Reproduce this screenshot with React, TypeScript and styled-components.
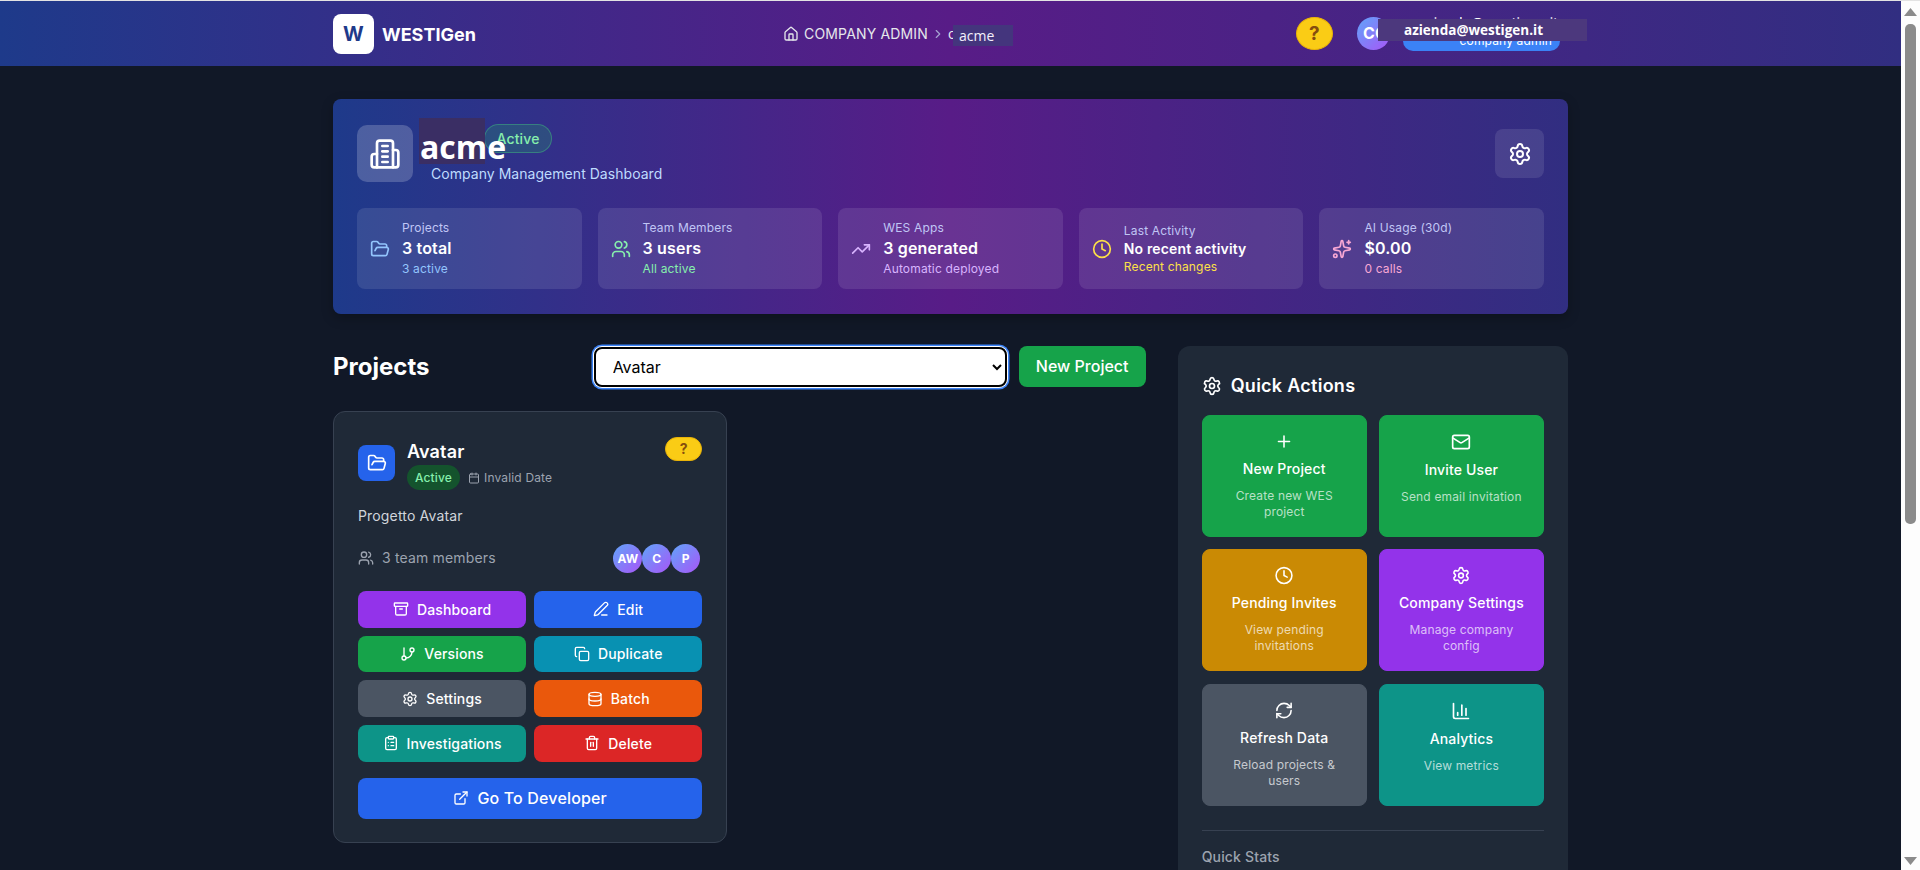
import React from "react";
import styled, { createGlobalStyle } from "styled-components";
import {
  Archive, Calendar, ChartColumn, ChevronRight, ClipboardList, Clock, Copy, Database,
  ExternalLink, FolderOpen, GitBranch, House, Mail, PenLine, Plus, RefreshCw, Settings, Sparkles, Trash2,
  TrendingUp, Users,
} from "lucide-react";

const GlobalStyle = createGlobalStyle`
  html, body { margin: 0; padding: 0; height: 100%; overflow: hidden; }
  body { background: #111827; font-family: Inter, "Liberation Sans", sans-serif; color: #fff; letter-spacing: 0.01em; }
  * { box-sizing: border-box; }
`;

const Frame = styled.div`
  display: flex;
  width: 1920px;
  height: 870px;
  overflow: hidden;
  border-top: 1px solid #e3e3e3;
`;

const Page = styled.div`
  flex: 1;
  min-width: 0;
  background: #111827;
`;

const Track = styled.div`
  position: relative;
  width: 19px;
  background: #fdfdfd;
  display: flex;
  flex-direction: column;
  align-items: center;
`;

const ArrowUp = styled.svg`
  width: 13px;
  height: 8px;
  margin-top: 7px;
  fill: #8b8b8b;
`;

const ArrowDown = styled(ArrowUp)`
  margin-top: auto;
  margin-bottom: 5px;
`;

const Thumb = styled.div`
  width: 11px;
  height: 500px;
  margin-top: 8px;
  border-radius: 5px;
  background: #8b8b8b;
`;

const Bar = styled.header`
  height: 65px;
  background: linear-gradient(to right, #1e3a8a, #581c87, #312e81);
`;

const Inner = styled.div`
  width: 1235px;
  margin: 0 auto 0 333px;
`;

const BarInner = styled(Inner)`
  height: 100%;
  display: flex;
  align-items: center;
`;

const Brand = styled.div`
  display: flex;
  align-items: center;
  gap: 8px;
  width: 450px;
  margin-top: 1px;
`;

const LogoBox = styled.div`
  width: 41px;
  height: 40px;
  border-radius: 8px;
  background: #fff;
  color: #1e3a8a;
  font-size: 20px;
  font-weight: 700;
  display: flex;
  align-items: center;
  justify-content: center;
`;

const BrandName = styled.span`
  font-size: 18px;
  font-weight: 700;
  letter-spacing: 0;
`;

const Crumbs = styled.nav`
  display: flex;
  align-items: center;
  font-size: 14px;
  color: #e5e7eb;
`;

const CrumbLabel = styled.span`
  margin-left: 5px;
`;

const CrumbSep = styled.span`
  display: flex;
  margin: 0 1px 0 3px;
  color: #a5a3d0;
`;

const CrumbCut = styled.span`
  width: 5px;
  overflow: hidden;
  margin-left: 2px;
`;

const CrumbMask = styled.span`
  width: 60px;
  height: 21px;
  padding-left: 6px;
  margin-top: 4px;
  background: #44357d;
  color: #f3f0fb;
  font-family: "Open Sans", sans-serif;
  font-size: 14px;
  line-height: 21px;
  letter-spacing: 0;
`;

const BarRight = styled.div`
  margin-left: auto;
  display: flex;
  align-items: center;
  position: relative;
  height: 100%;
`;

const HelpButton = styled.div`
  width: 37px;
  height: 33px;
  border-radius: 50%;
  background: #facc15;
  border: 1px solid #eab308;
  color: #854d0e;
  font-weight: 700;
  font-size: 19px;
  display: flex;
  align-items: center;
  justify-content: center;
`;

const UserAvatar = styled.div`
  width: 33px;
  height: 33px;
  margin-left: 24px;
  padding-left: 6px;
  border-radius: 50%;
  background: linear-gradient(135deg, #60a5fa, #a855f7);
  font-size: 16px;
  font-weight: 700;
  line-height: 33px;
  overflow: hidden;
`;

const UserBlock = styled.div`
  width: 157px;
  margin-left: 13px;
  margin-right: 8px;
  display: flex;
  flex-direction: column;
  align-items: flex-end;
`;

const UserEmail = styled.div`
  font-size: 14px;
  line-height: 17px;
  padding-right: 2px;
  margin-top: -2px;
`;

const RolePill = styled.div`
  width: 100%;
  height: 20px;
  border-radius: 10px;
  background: #3b82f6;
  font-size: 12px;
  line-height: 20px;
  text-align: right;
  padding-right: 8px;
`;

const EmailMask = styled.div`
  position: absolute;
  left: 82px;
  top: 18px;
  width: 209px;
  height: 22px;
  background: #4c387d;
  font-family: "Open Sans", sans-serif;
  font-size: 13.5px;
  font-weight: 700;
  line-height: 22px;
  letter-spacing: 0;
  padding-left: 26px;
`;

const Hero = styled.section`
  margin-top: 33px;
  height: 215px;
  padding: 24px;
  border-radius: 8px;
  background: linear-gradient(to right, #1e3a8a, #581c87, #312e81);
  box-shadow: 0 4px 12px rgba(0, 0, 0, 0.25);
`;

const HeroTop = styled.div`
  display: flex;
  align-items: center;
  justify-content: space-between;
  height: 61px;
`;

const HeroLeft = styled.div`
  display: flex;
  align-items: center;
  gap: 16px;
  height: 100%;
`;

const HeroIcon = styled.div`
  width: 56px;
  height: 57px;
  border-radius: 10px;
  background: rgba(255, 255, 255, 0.2);
  display: flex;
  align-items: center;
  justify-content: center;
`;

const BuildingSvg = styled.svg`
  width: 32px;
  height: 32px;
  fill: none;
  stroke: #fff;
  stroke-width: 2;
  stroke-linecap: round;
  stroke-linejoin: round;
`;

const HeroText = styled.div`
  align-self: flex-start;
  margin-top: -5px;
`;

const TitleRow = styled.div`
  display: flex;
  align-items: flex-start;
  margin-left: -10px;
`;

const NameMask = styled.div`
  position: relative;
  z-index: 1;
  width: 66px;
  height: 46px;
  background: #3a2e64;
  padding-left: 1px;
  font-family: "Open Sans", sans-serif;
  font-size: 32px;
  font-weight: 700;
  line-height: 57px;
  letter-spacing: 0;
  white-space: nowrap;
`;

const HeroBadge = styled.span`
  width: 68px;
  height: 29px;
  margin: 6px 0 0 -1px;
  border: 1px solid rgba(74, 222, 128, 0.35);
  border-radius: 15px;
  background: rgba(34, 197, 94, 0.2);
  color: #86efac;
  font-size: 14px;
  font-weight: 500;
  line-height: 27px;
  text-align: center;
`;

const HeroSub = styled.div`
  margin-top: -2px;
  margin-left: 2px;
  color: #bfdbfe;
  font-size: 14px;
  line-height: 24px;
  letter-spacing: 0.003em;
`;

const GearButton = styled.div`
  width: 49px;
  height: 49px;
  border-radius: 8px;
  background: rgba(255, 255, 255, 0.1);
  display: flex;
  align-items: center;
  justify-content: center;
`;

const StatGrid = styled.div`
  display: grid;
  grid-template-columns: repeat(5, 1fr);
  gap: 16px;
  margin-top: 24px;
`;

const StatCard = styled.div`
  height: 81px;
  padding: 0 12px 0 13px;
  border-radius: 8px;
  background: rgba(255, 255, 255, 0.1);
  display: flex;
  align-items: center;
  gap: 12px;
`;

const StatLabel = styled.div`
  color: #c0c6f5;
  font-size: 12px;
  line-height: 16px;
`;

const StatValue = styled.div<{ $small?: boolean }>`
  font-size: ${(p) => (p.$small ? "14px" : "16px")};
  line-height: ${(p) => (p.$small ? "20px" : "24px")};
  margin-bottom: ${(p) => (p.$small ? "0" : "1px")};
  font-weight: 600;
`;

const StatNote = styled.div<{ $color: string }>`
  color: ${(p) => p.$color};
  font-size: 12px;
  line-height: 16px;
`;

const Columns = styled.div`
  display: grid;
  grid-template-columns: 812.67px 390.33px;
  gap: 32px;
  margin-top: 32px;
`;

const ProjectsHead = styled.div`
  display: flex;
  align-items: center;
  justify-content: space-between;
  height: 41px;
  margin-bottom: 24px;
`;

const ProjectsTitle = styled.h2`
  margin: 0;
  font-size: 24px;
  font-weight: 700;
  letter-spacing: 0;
`;

const HeadTools = styled.div`
  display: flex;
  align-items: center;
  gap: 12px;
`;

const ProjectSelect = styled.select`
  width: 413px;
  height: 40px;
  margin-top: 1px;
  padding: 0 10px 0 13px;
  border: 2px solid #000;
  border-radius: 8px;
  background-color: #fff;
  color: #000;
  font-family: Inter, sans-serif;
  font-size: 16px;
  box-shadow: 0 0 0 1px #fff, 0 0 0 2.5px #3b82f6;
`;

const NewButton = styled.button`
  width: 127px;
  height: 41px;
  margin-top: -1px;
  border: 0;
  border-radius: 8px;
  background: #16a34a;
  color: #fff;
  font-family: Inter, sans-serif;
  font-size: 16px;
  font-weight: 500;
`;

const ProjectCard = styled.article`
  width: 394.33px;
  height: 432px;
  padding: 24px;
  border: 1px solid #374151;
  border-radius: 12px;
  background: #1f2937;
`;

const CardHead = styled.div`
  display: flex;
  justify-content: space-between;
  align-items: flex-start;
  height: 54px;
`;

const CardIdentity = styled.div`
  display: flex;
  align-items: center;
  gap: 12px;
  height: 100%;
`;

const FolderBox = styled.div`
  width: 37px;
  height: 36px;
  border-radius: 8px;
  background: #2563eb;
  display: flex;
  align-items: center;
  justify-content: center;
`;

const CardName = styled.div`
  font-size: 18px;
  font-weight: 600;
  line-height: 28px;
  margin-top: 2px;
`;

const MetaRow = styled.div`
  display: flex;
  align-items: center;
  gap: 8px;
  margin-top: -1px;
`;

const ActiveBadge = styled.span`
  width: 53px;
  height: 25px;
  border-radius: 13px;
  background: #14532d;
  color: #86efac;
  font-size: 12px;
  font-weight: 500;
  line-height: 25px;
  text-align: center;
`;

const DateText = styled.span`
  display: flex;
  align-items: center;
  gap: 4px;
  color: #9ca3af;
  font-size: 12px;
`;

const HelpChip = styled.div`
  width: 37px;
  height: 24px;
  margin-top: 1px;
  border-radius: 12px;
  background: #facc15;
  border: 1px solid #eab308;
  color: #854d0e;
  font-size: 14px;
  font-weight: 700;
  line-height: 22px;
  text-align: center;
`;

const Description = styled.p`
  margin: 16px 0 18px;
  color: #d1d5db;
  font-size: 14px;
  line-height: 20px;
`;

const TeamRow = styled.div`
  display: flex;
  align-items: center;
  justify-content: space-between;
  height: 29px;
  margin-bottom: 18px;
  color: #9ca3af;
  font-size: 14px;
`;

const TeamLabel = styled.div`
  display: flex;
  align-items: center;
  gap: 8px;
  margin-top: -2px;
`;

const Avatars = styled.div`
  display: flex;
  margin-right: 2px;
`;

const MiniAvatar = styled.div`
  width: 29px;
  height: 29px;
  border-radius: 50%;
  background: linear-gradient(135deg, #60a5fa, #a855f7);
  color: #fff;
  font-size: 12px;
  font-weight: 700;
  line-height: 29px;
  text-align: center;
`;

const ActionGrid = styled.div`
  display: grid;
  grid-template-columns: 1fr 1fr;
  gap: 8px;
`;

const ActionButton = styled.button<{ $bg: string }>`
  height: 36.67px;
  padding-bottom: 1px;
  border: 0;
  border-radius: 8px;
  background: ${(p) => p.$bg};
  color: #fff;
  font-family: Inter, sans-serif;
  font-size: 14px;
  font-weight: 500;
  letter-spacing: 0.01em;
  display: flex;
  align-items: center;
  justify-content: center;
  gap: 8px;
`;

const DevButton = styled(ActionButton)`
  width: 100%;
  height: 41px;
  margin-top: 16px;
  font-size: 16px;
`;

const Side = styled.aside`
  height: 700px;
  padding: 24px;
  border-radius: 12px;
  background: #1f2937;
`;

const SideTitle = styled.h3`
  margin: 2px 0 15px;
  display: flex;
  align-items: center;
  gap: 9px;
  font-size: 18px;
  font-weight: 600;
  line-height: 28px;
  letter-spacing: 0.015em;
`;

const QuickGrid = styled.div`
  display: grid;
  grid-template-columns: 1fr 1fr;
  gap: 12.33px 12px;
`;

const QuickCard = styled.div<{ $bg: string }>`
  height: 122px;
  padding: 16px;
  border: 1px solid ${(p) => p.$bg};
  border-radius: 8px;
  background: ${(p) => p.$bg};
  display: flex;
  flex-direction: column;
  align-items: center;
  text-align: center;
`;

const QuickTitle = styled.div`
  margin: 8px 0 9px;
  font-size: 14px;
  font-weight: 500;
  line-height: 20px;
  white-space: nowrap;
`;

const QuickText = styled.div`
  color: rgba(255, 255, 255, 0.7);
  font-size: 12px;
  line-height: 16px;
`;

const StatsDivider = styled.div`
  margin-top: 24.5px;
  padding-top: 16px;
  border-top: 1px solid #374151;
  color: #9ca3af;
  font-size: 14px;
  font-weight: 500;
  line-height: 20px;
`;

const stats = [
  { icon: <FolderOpen size={20} color="#93c5fd" />, label: "Projects", value: "3 total", note: "3 active", color: "#93c5fd" },
  { icon: <Users size={20} color="#86efac" />, label: "Team Members", value: "3 users", note: "All active", color: "#86efac" },
  { icon: <TrendingUp size={20} color="#d8b4fe" />, label: "WES Apps", value: "3 generated", note: "Automatic deployed", color: "#d8b4fe" },
  { icon: <Clock size={20} color="#fde047" />, label: "Last Activity", value: "No recent activity", note: "Recent changes", color: "#fde047", small: true },
  { icon: <Sparkles size={20} color="#f9a8d4" />, label: "AI Usage (30d)", value: "$0.00", note: "0 calls", color: "#f9a8d4" },
];

const actions = [
  { icon: <Archive size={16} />, label: "Dashboard", bg: "#9333ea" },
  { icon: <PenLine size={16} />, label: "Edit", bg: "#2563eb" },
  { icon: <GitBranch size={16} />, label: "Versions", bg: "#16a34a" },
  { icon: <Copy size={16} />, label: "Duplicate", bg: "#0891b2" },
  { icon: <Settings size={16} />, label: "Settings", bg: "#4b5563" },
  { icon: <Database size={16} />, label: "Batch", bg: "#ea580c" },
  { icon: <ClipboardList size={16} />, label: "Investigations", bg: "#0d9488" },
  { icon: <Trash2 size={16} />, label: "Delete", bg: "#dc2626" },
];

const quick = [
  { icon: <Plus size={20} />, title: "New Project", text: "Create new WES project", bg: "#16a34a" },
  { icon: <Mail size={20} />, title: "Invite User", text: "Send email invitation", bg: "#16a34a" },
  { icon: <Clock size={20} />, title: "Pending Invites", text: "View pending invitations", bg: "#ca8a04" },
  { icon: <Settings size={20} />, title: "Company Settings", text: "Manage company config", bg: "#9333ea" },
  { icon: <RefreshCw size={20} />, title: "Refresh Data", text: "Reload projects & users", bg: "#4b5563" },
  { icon: <ChartColumn size={20} />, title: "Analytics", text: "View metrics", bg: "#0d9488" },
];

const App = () => {
  return (
    <>
      <GlobalStyle />
      <Frame>
        <Page>
          <Bar>
            <BarInner>
              <Brand>
                <LogoBox>W</LogoBox>
                <BrandName>WESTIGen</BrandName>
              </Brand>
              <Crumbs>
                <House size={16} />
                <CrumbLabel>COMPANY ADMIN</CrumbLabel>
                <CrumbSep><ChevronRight size={14} /></CrumbSep>
                <CrumbCut>c</CrumbCut>
                <CrumbMask>acme</CrumbMask>
              </Crumbs>
              <BarRight>
                <HelpButton>?</HelpButton>
                <UserAvatar>CO</UserAvatar>
                <UserBlock>
                  <UserEmail>azienda@westigen.it</UserEmail>
                  <RolePill>company admin</RolePill>
                </UserBlock>
                <EmailMask>azienda@westigen.it</EmailMask>
              </BarRight>
            </BarInner>
          </Bar>
          <Inner>
            <Hero>
              <HeroTop>
                <HeroLeft>
                  <HeroIcon>
                    <BuildingSvg viewBox="0 0 24 24">
                      <path d="M6 22V4a2 2 0 0 1 2-2h8a2 2 0 0 1 2 2v18Z" />
                      <path d="M6 12H4a2 2 0 0 0-2 2v6a2 2 0 0 0 2 2h2" />
                      <path d="M18 9h2a2 2 0 0 1 2 2v9a2 2 0 0 1-2 2h-2" />
                      <path d="M10 6h4" />
                      <path d="M10 10h4" />
                      <path d="M10 14h4" />
                      <path d="M10 18h4" />
                    </BuildingSvg>
                  </HeroIcon>
                  <HeroText>
                    <TitleRow>
                      <NameMask>acme</NameMask>
                      <HeroBadge>Active</HeroBadge>
                    </TitleRow>
                    <HeroSub>Company Management Dashboard</HeroSub>
                  </HeroText>
                </HeroLeft>
                <GearButton><Settings size={24} /></GearButton>
              </HeroTop>
              <StatGrid>
                {stats.map((s) => (
                  <StatCard key={s.label}>
                    {s.icon}
                    <div>
                      <StatLabel>{s.label}</StatLabel>
                      <StatValue $small={s.small}>{s.value}</StatValue>
                      <StatNote $color={s.color}>{s.note}</StatNote>
                    </div>
                  </StatCard>
                ))}
              </StatGrid>
            </Hero>
            <Columns>
              <div>
                <ProjectsHead>
                  <ProjectsTitle>Projects</ProjectsTitle>
                  <HeadTools>
                    <ProjectSelect defaultValue="avatar">
                      <option value="avatar">Avatar</option>
                    </ProjectSelect>
                    <NewButton>New Project</NewButton>
                  </HeadTools>
                </ProjectsHead>
                <ProjectCard>
                  <CardHead>
                    <CardIdentity>
                      <FolderBox><FolderOpen size={20} /></FolderBox>
                      <div>
                        <CardName>Avatar</CardName>
                        <MetaRow>
                          <ActiveBadge>Active</ActiveBadge>
                          <DateText><Calendar size={12} />Invalid Date</DateText>
                        </MetaRow>
                      </div>
                    </CardIdentity>
                    <HelpChip>?</HelpChip>
                  </CardHead>
                  <Description>Progetto Avatar</Description>
                  <TeamRow>
                    <TeamLabel><Users size={16} />3 team members</TeamLabel>
                    <Avatars>
                      <MiniAvatar>AW</MiniAvatar>
                      <MiniAvatar>C</MiniAvatar>
                      <MiniAvatar>P</MiniAvatar>
                    </Avatars>
                  </TeamRow>
                  <ActionGrid>
                    {actions.map((a) => (
                      <ActionButton key={a.label} $bg={a.bg}>{a.icon}{a.label}</ActionButton>
                    ))}
                  </ActionGrid>
                  <DevButton $bg="#2563eb"><ExternalLink size={16} />Go To Developer</DevButton>
                </ProjectCard>
              </div>
              <Side>
                <SideTitle><Settings size={20} />Quick Actions</SideTitle>
                <QuickGrid>
                  {quick.map((q) => (
                    <QuickCard key={q.title} $bg={q.bg}>
                      {q.icon}
                      <QuickTitle>{q.title}</QuickTitle>
                      <QuickText>{q.text}</QuickText>
                    </QuickCard>
                  ))}
                </QuickGrid>
                <StatsDivider>Quick Stats</StatsDivider>
              </Side>
            </Columns>
          </Inner>
        </Page>
        <Track>
          <ArrowUp viewBox="0 0 13 8"><polygon points="6.5,0 13,8 0,8" /></ArrowUp>
          <Thumb />
          <ArrowDown viewBox="0 0 13 8"><polygon points="0,0 13,0 6.5,8" /></ArrowDown>
        </Track>
      </Frame>
    </>
  );
};

export default App;
